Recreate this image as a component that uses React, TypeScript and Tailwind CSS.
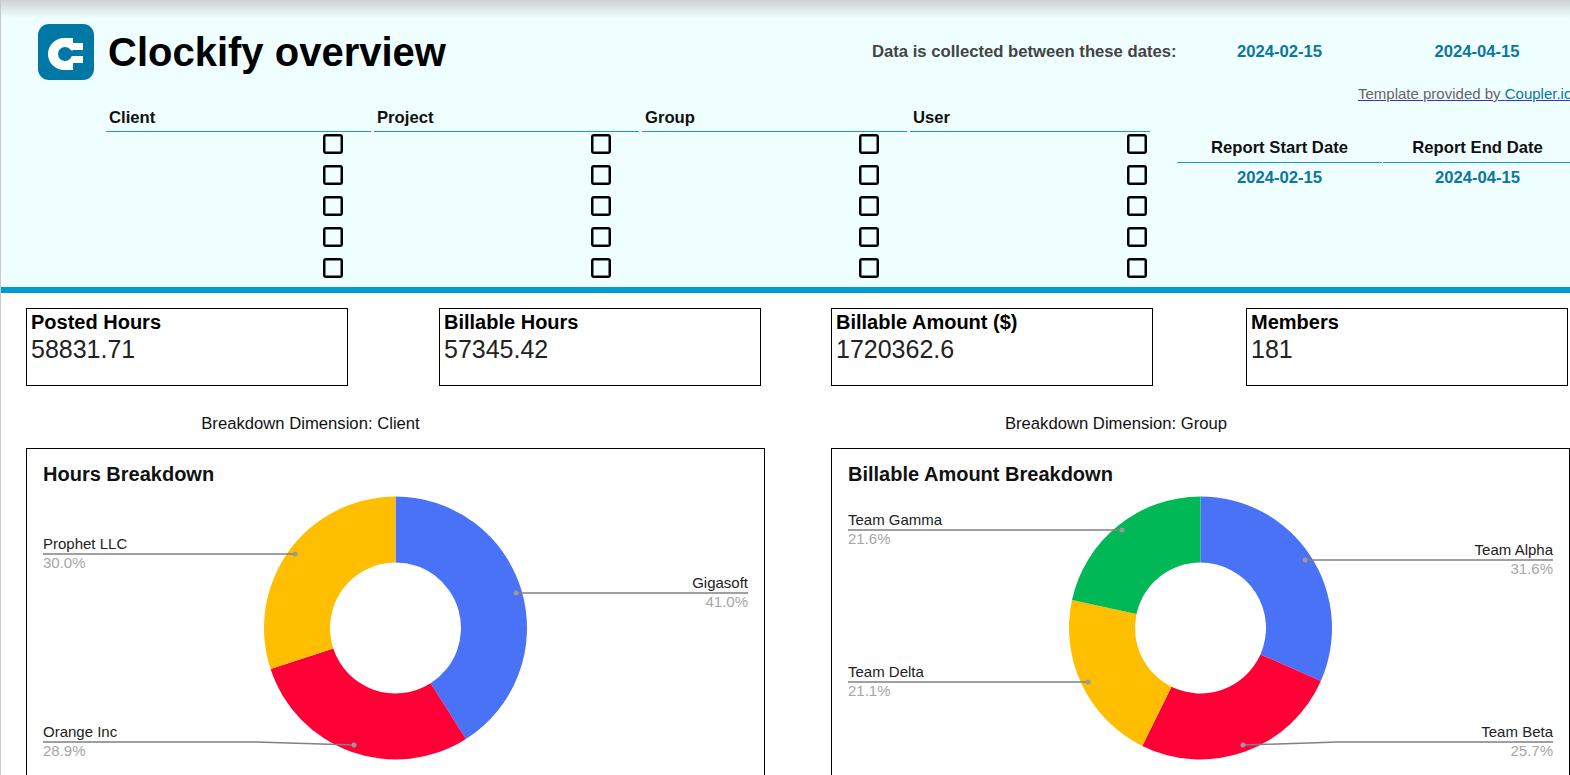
const font = { fontFamily: '"Liberation Sans", Arial, sans-serif' };

type Slice = { color: string; pct: number };
type Callout = {
  label: string;
  pct: string;
  side: 'left' | 'right';
  y: number;
  dot: [number, number];
  bendX?: number;
};

const filters = ['Client', 'Project', 'Group', 'User'];
const rows = [0, 1, 2, 3, 4];

const stats = [
  { title: 'Posted Hours', value: '58831.71', className: 'ml-[25px]' },
  { title: 'Billable Hours', value: '57345.42', className: 'ml-[91px]' },
  { title: 'Billable Amount ($)', value: '1720362.6', className: 'ml-[70px]' },
  { title: 'Members', value: '181', className: 'ml-[93px]' },
];

const clientSlices: Slice[] = [
  { color: '#4a72f6', pct: 41.0 },
  { color: '#ff0036', pct: 28.95 },
  { color: '#ffbe00', pct: 30.05 },
];

const groupSlices: Slice[] = [
  { color: '#4a72f6', pct: 31.6 },
  { color: '#ff0036', pct: 25.7 },
  { color: '#ffbe00', pct: 21.1 },
  { color: '#00b855', pct: 21.6 },
];

const clientCallouts: Callout[] = [
  { label: 'Prophet LLC', pct: '30.0%', side: 'left', y: 553, dot: [295, 553] },
  { label: 'Gigasoft', pct: '41.0%', side: 'right', y: 592, dot: [516, 592] },
  { label: 'Orange Inc', pct: '28.9%', side: 'left', y: 741, dot: [354, 744], bendX: 256 },
];

const groupCallouts: Callout[] = [
  { label: 'Team Gamma', pct: '21.6%', side: 'left', y: 529, dot: [1122, 529] },
  { label: 'Team Delta', pct: '21.1%', side: 'left', y: 681, dot: [1088, 681] },
  { label: 'Team Alpha', pct: '31.6%', side: 'right', y: 559, dot: [1305, 559] },
  { label: 'Team Beta', pct: '25.7%', side: 'right', y: 741, dot: [1243, 744], bendX: 1338 },
];

function slicePath(cx: number, cy: number, from: number, to: number) {
  const outer = 131.5;
  const inner = 65.5;
  const a = (from / 100) * Math.PI * 2;
  const b = (to / 100) * Math.PI * 2;
  const large = to - from > 50 ? 1 : 0;
  const pt = (r: number, t: number) => `${cx + r * Math.sin(t)} ${cy - r * Math.cos(t)}`;
  return `M${pt(outer, a)} A${outer} ${outer} 0 ${large} 1 ${pt(outer, b)} L${pt(inner, b)} A${inner} ${inner} 0 ${large} 0 ${pt(inner, a)} Z`;
}

function Logo() {
  return (
    <svg width="56" height="56" viewBox="0 0 56 56" className="shrink-0">
      <rect width="56" height="56" rx="11" fill="#0078a5" />
      <path d="M35 14 H26 A16 16 0 0 0 26 46 H35 Z" fill="#fff" />
      <rect x="35" y="19" width="10" height="7" fill="#fff" />
      <rect x="35" y="32" width="10" height="7" fill="#fff" />
      <circle cx="27" cy="30" r="7" fill="#0078a5" />
      <rect x="27" y="26.500" width="19" height="5.500" fill="#0078a5" />
    </svg>
  );
}

function Donut({ cx, slices }: { cx: number; slices: Slice[] }) {
  let start = 0;
  return (
    <>
      {slices.map((s) => {
        const from = start;
        start += s.pct;
        return <path key={s.color} d={slicePath(cx, 627, from, start)} fill={s.color} />;
      })}
    </>
  );
}

function CalloutLabel({ c, left, right }: { c: Callout; left: number; right: number }) {
  const edge = c.side === 'left' ? left : right;
  const anchor = c.side === 'left' ? 'start' : 'end';
  const points = c.bendX
    ? `${edge},${c.y} ${c.bendX},${c.y} ${c.dot[0]},${c.dot[1]}`
    : `${edge},${c.y} ${c.dot[0]},${c.dot[1]}`;
  return (
    <g>
      <polyline points={points} fill="none" stroke="#808080" strokeWidth="1.5" />
      <circle cx={c.dot[0]} cy={c.dot[1]} r="2.5" fill="#9a9a9a" />
      <text x={edge} y={c.y - 5} textAnchor={anchor} fontSize="15" fill="#222">
        {c.label}
      </text>
      <text x={edge} y={c.y + 13.5} textAnchor={anchor} fontSize="15" fill="#a6a6a6">
        {c.pct}
      </text>
    </g>
  );
}

function ChartCard({
  title,
  originX,
  width,
  cx,
  right,
  slices,
  callouts,
  className,
}: {
  title: string;
  originX: number;
  width: number;
  cx: number;
  right: number;
  slices: Slice[];
  callouts: Callout[];
  className: string;
}) {
  return (
    <div className={`h-[340px] border border-black bg-white shrink-0 ${className}`}>
      <h3 className="pl-4 pt-[13px] text-[20px] leading-6 font-bold text-[#111]">{title}</h3>
      <svg width={width} height="300" viewBox={`${originX} 485 ${width} 300`} style={font}>
        <Donut cx={cx} slices={slices} />
        {callouts.map((c) => (
          <CalloutLabel key={c.label} c={c} left={originX + 16} right={right} />
        ))}
      </svg>
    </div>
  );
}

export default function App() {
  return (
    <div
      className="relative w-[1570px] h-[775px] overflow-hidden bg-white border-l border-[#c8c8c8]"
      style={font}
    >
      {/* top shadow from the sheet toolbar */}
      <div className="absolute inset-x-0 top-0 h-[18px] bg-gradient-to-b from-[#cdd3d4] to-[#effeff] pointer-events-none" />

      <header className="h-[287px] bg-[#effeff] pt-6">
        <div className="flex items-center h-14 pl-[37px] whitespace-nowrap">
          <Logo />
          <h1 className="ml-[14px] w-[337px] shrink-0 text-[40px] leading-none font-bold text-black">Clockify overview</h1>
          <span className="ml-[427px] mb-[2px] w-[305px] shrink-0 text-[16.67px] font-bold text-[#434343]">
            Data is collected between these dates:
          </span>
          <span className="mb-[2px] w-[205px] shrink-0 text-center text-[16.67px] font-bold text-[#0b76a0]">2024-02-15</span>
          <span className="mb-[2px] w-[190px] shrink-0 text-center text-[16.67px] font-bold text-[#0b76a0]">2024-04-15</span>
        </div>

        <div className="mt-[5px] h-[17px] pl-[1357px] whitespace-nowrap text-[15px] leading-[17px] text-[#666] underline decoration-[#3b2fd0]">
          Template provided by <span className="text-[#0b76a0] decoration-[#0b76a0]">Coupler.io</span>
        </div>

        <div className="flex items-start pl-[105px]">
          <div className="flex w-[1071px] shrink-0">
            {filters.map((f) => (
              <div key={f} className="w-[268px] shrink-0 last:w-[243px]">
                <div className="mr-[3px] h-[30px] pl-[3px] border-b border-[#1a9cc9] text-[16.67px] leading-[32px] font-bold text-[#111]">
                  {f}
                </div>
                <div className="flex flex-col items-end w-[237px] -mt-1">
                  {rows.map((r) => (
                    <div key={r} className="h-[31px] flex items-center">
                      <div className="w-5 h-5 rounded-[3px] border-2 border-black shadow-[inset_0_0_0_0.5px_#000]" />
                    </div>
                  ))}
                </div>
              </div>
            ))}
          </div>

          <div className="flex mt-[30px]">
            <div className="w-[205px] text-center">
              <div className="h-[31px] border-b border-[#1a9cc9] text-[16.67px] leading-[32px] font-bold text-[#111]">
                Report Start Date
              </div>
              <div className="text-[16.67px] leading-[30px] font-bold text-[#0b76a0]">2024-02-15</div>
            </div>
            <div className="w-[189px] ml-px text-center">
              <div className="h-[31px] border-b border-[#1a9cc9] text-[16.67px] leading-[32px] font-bold text-[#111]">
                Report End Date
              </div>
              <div className="text-[16.67px] leading-[30px] font-bold text-[#0b76a0]">2024-04-15</div>
            </div>
          </div>
        </div>
      </header>

      <div className="h-[6px] bg-[#009bd0]" />

      <div className="flex mt-[15px]">
        {stats.map((s) => (
          <div key={s.title} className={`w-[322px] h-[78px] shrink-0 border border-black px-1 ${s.className}`}>
            <div className="text-[20px] leading-[25px] mt-[1px] font-bold text-black">{s.title}</div>
            <div className="text-[25px] leading-[29px] text-[#222]">{s.value}</div>
          </div>
        ))}
      </div>

      <div className="flex mt-[28px] text-[16.67px] leading-[20px] text-[#111] whitespace-nowrap">
        <div className="ml-[25px] w-[569px] text-center">Breakdown Dimension: Client</div>
        <div className="ml-[236px] w-[570px] text-center">Breakdown Dimension: Group</div>
      </div>

      <div className="flex mt-[14px]">
        <ChartCard
          title="Hours Breakdown"
          originX={27}
          width={737}
          cx={395.5}
          right={748}
          slices={clientSlices}
          callouts={clientCallouts}
          className="ml-[25px] w-[739px]"
        />
        <ChartCard
          title="Billable Amount Breakdown"
          originX={832}
          width={737}
          cx={1200.5}
          right={1553}
          slices={groupSlices}
          callouts={groupCallouts}
          className="ml-[66px] w-[739px]"
        />
      </div>
    </div>
  );
}
